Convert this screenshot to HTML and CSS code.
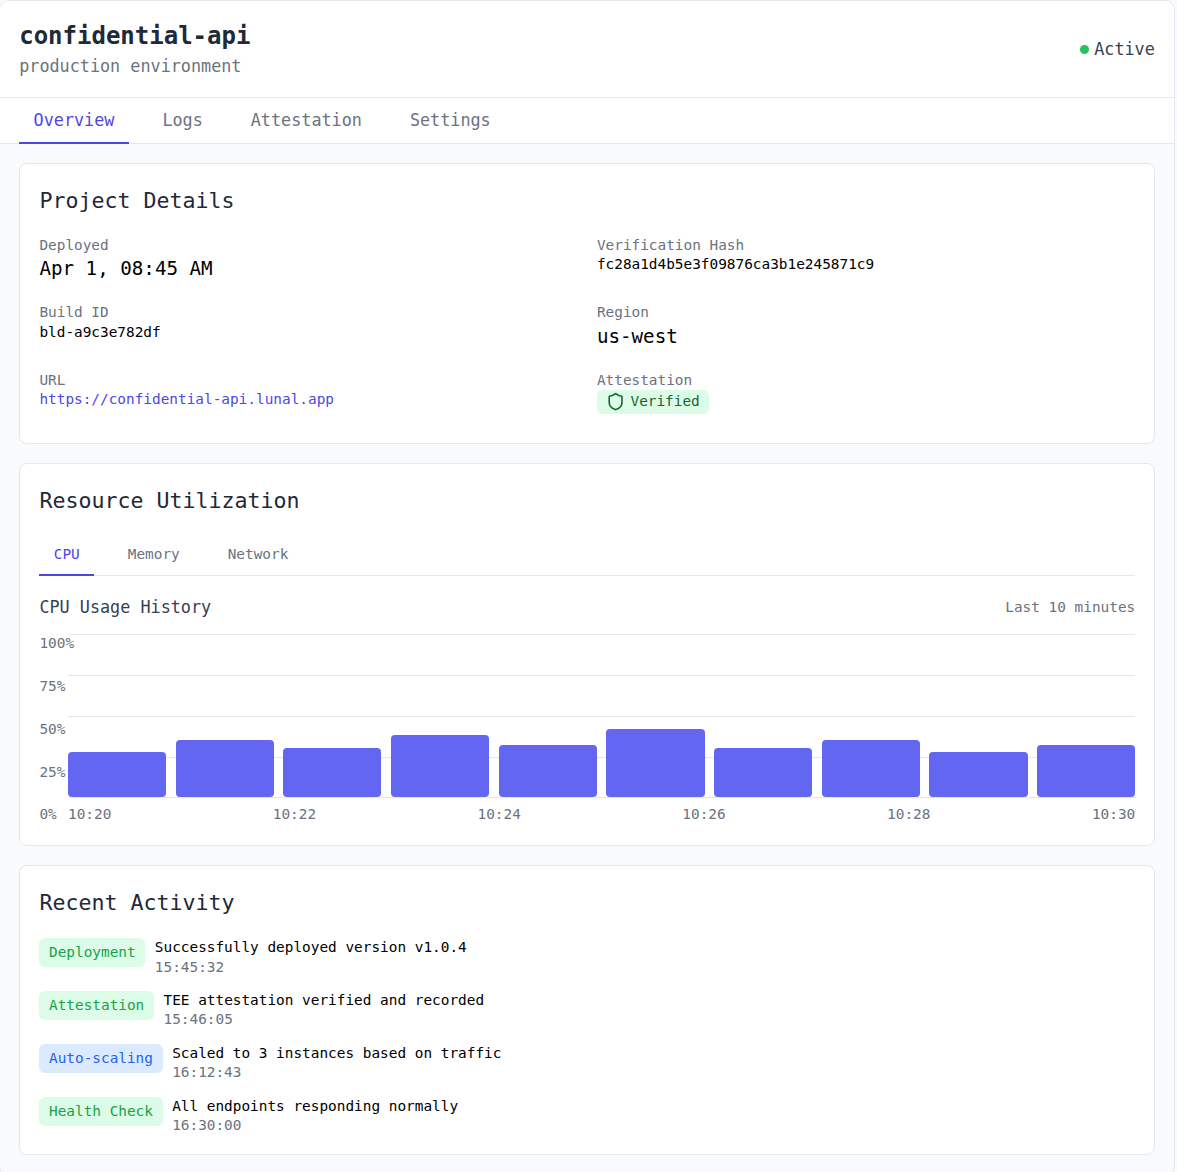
FILE: index.html
```html
<!DOCTYPE html>
<html lang="en">
<head>
<meta charset="utf-8">
<title>confidential-api</title>
<link rel="stylesheet" href="styles.css">
</head>
<body>
<div class="app">
  <header class="header">
    <div>
      <h1 class="project-name">confidential-api</h1>
      <p class="project-env">production environment</p>
    </div>
    <div class="status"><span class="status-dot"></span><span>Active</span></div>
  </header>
  <nav class="tabs main-tabs">
    <a class="tab active">Overview</a>
    <a class="tab">Logs</a>
    <a class="tab">Attestation</a>
    <a class="tab">Settings</a>
  </nav>
  <main class="content">
    <section class="card">
      <h2 class="card-title">Project Details</h2>
      <div class="details">
        <div><div class="label">Deployed</div><div class="value-lg">Apr 1, 08:45 AM</div></div>
        <div><div class="label">Verification Hash</div><div class="value">fc28a1d4b5e3f09876ca3b1e245871c9</div></div>
        <div><div class="label">Build ID</div><div class="value">bld-a9c3e782df</div></div>
        <div><div class="label">Region</div><div class="value-lg">us-west</div></div>
        <div><div class="label">URL</div><a class="value link">https://confidential-api.lunal.app</a></div>
        <div><div class="label">Attestation</div>
          <span class="verified">
            <svg class="shield" viewBox="0 0 24 24" fill="none" stroke="currentColor" stroke-width="2" stroke-linecap="round" stroke-linejoin="round"><path d="M20 13c0 5-3.5 7.5-7.66 8.95a1 1 0 0 1-.67-.01C7.5 20.5 4 18 4 13V6a1 1 0 0 1 1-1c2 0 4.5-1.2 6.24-2.72a1.17 1.17 0 0 1 1.52 0C14.51 3.81 17 5 19 5a1 1 0 0 1 1 1z"/></svg>
            <span class="verified-text">Verified</span>
          </span>
        </div>
      </div>
    </section>
    <section class="card">
      <h2 class="card-title">Resource Utilization</h2>
      <nav class="tabs sub-tabs">
        <a class="tab active">CPU</a>
        <a class="tab">Memory</a>
        <a class="tab">Network</a>
      </nav>
      <div class="chart-head">
        <span class="chart-title">CPU Usage History</span>
        <span class="chart-range">Last 10 minutes</span>
      </div>
      <div class="chart">
        <div class="y-axis"><span>100%</span><span>75%</span><span>50%</span><span>25%</span><span>0%</span></div>
        <div class="plot">
          <div class="grid-lines"><i></i><i></i><i></i><i></i><i></i></div>
          <div class="bars">
            <div class="bar" style="height:28%"></div>
            <div class="bar" style="height:35%"></div>
            <div class="bar" style="height:30%"></div>
            <div class="bar" style="height:38%"></div>
            <div class="bar" style="height:32%"></div>
            <div class="bar" style="height:42%"></div>
            <div class="bar" style="height:30%"></div>
            <div class="bar" style="height:35%"></div>
            <div class="bar" style="height:28%"></div>
            <div class="bar" style="height:32%"></div>
          </div>
        </div>
        <div class="x-axis"><span>10:20</span><span>10:22</span><span>10:24</span><span>10:26</span><span>10:28</span><span>10:30</span></div>
      </div>
    </section>
    <section class="card">
      <h2 class="card-title">Recent Activity</h2>
      <ul class="activity">
        <li class="activity-item"><span class="tag tag-green">Deployment</span><div><div class="activity-text">Successfully deployed version v1.0.4</div><div class="activity-time">15:45:32</div></div></li>
        <li class="activity-item"><span class="tag tag-green">Attestation</span><div><div class="activity-text">TEE attestation verified and recorded</div><div class="activity-time">15:46:05</div></div></li>
        <li class="activity-item"><span class="tag tag-blue">Auto-scaling</span><div><div class="activity-text">Scaled to 3 instances based on traffic</div><div class="activity-time">16:12:43</div></div></li>
        <li class="activity-item"><span class="tag tag-green">Health Check</span><div><div class="activity-text">All endpoints responding normally</div><div class="activity-time">16:30:00</div></div></li>
      </ul>
    </section>
  </main>
</div>
</body>
</html>
```
FILE: styles.css
```css
* { box-sizing: border-box; }
html, body { margin: 0; padding: 0; }
body {
  background: #f9fafb;
  font-family: "DejaVu Sans Mono", monospace;
  font-size: 14.4px;
  color: #1f2937;
  overflow: hidden;
}
.app {
  width: 1176px;
  margin-left: -1px;
  background: #f9fafb;
  border: 1px solid #e5e7eb;
  border-radius: 10px;
  overflow: hidden;
}
.header {
  display: flex;
  justify-content: space-between;
  align-items: center;
  background: #fff;
  padding: 20.2px 19.2px 18.2px 19.2px;
  border-bottom: 1px solid #e5e7eb;
}
.project-name {
  margin: 0 0 2.6px;
  font-size: 24px;
  line-height: 30px;
  font-weight: 700;
  color: #1f2937;
}
.project-env {
  margin: 0;
  font-size: 16.8px;
  line-height: 25.2px;
  color: #6b7280;
}
.status {
  display: flex;
  align-items: center;
  gap: 4.8px;
  margin-bottom: 1px;
  font-size: 16.8px;
  line-height: 25.2px;
  color: #374151;
}
.status-dot {
  width: 9.6px;
  height: 9.6px;
  border-radius: 50%;
  background: #22c55e;
}
.tabs {
  display: flex;
  gap: 19.2px;
  background: #fff;
  border-bottom: 1px solid #e5e7eb;
}
.main-tabs { padding: 0 19.2px; }
.tab {
  padding: 9.6px 14.4px 8.6px;
  color: #6b7280;
  border-bottom: 2px solid transparent;
  margin-bottom: -1px;
}
.main-tabs .tab {
  font-size: 16.8px;
  line-height: 25.2px;
}
.sub-tabs { margin: 16.9px 0 19.2px; }
.sub-tabs .tab {
  font-size: 14.4px;
  line-height: 21.6px;
}
.tab.active {
  color: #4f46e5;
  border-bottom-color: #4f46e5;
}
.content {
  display: flex;
  flex-direction: column;
  gap: 19.2px;
  padding: 19.2px 18.6px 19.2px 19px;
}
.card {
  background: #fff;
  border: 1px solid #e5e7eb;
  border-radius: 8px;
  padding: 20.8px 19.2px 19.2px 19.4px;
}
.card-title {
  margin: 0;
  font-size: 21.6px;
  line-height: 32.4px;
  font-weight: 400;
  color: #1f2937;
}
.details {
  display: grid;
  grid-template-columns: 1fr 1fr;
  gap: 19.2px;
  margin-top: 19.3px;
  padding-bottom: 9.4px;
}
.label {
  font-size: 14.4px;
  line-height: 19.2px;
  color: #6b7280;
}
.value {
  display: block;
  font-size: 14.4px;
  line-height: 19.2px;
  color: #000;
}
.value-lg {
  font-size: 19.2px;
  line-height: 28.8px;
  color: #000;
}
.value.link { color: #4f46e5; }
.verified {
  display: inline-flex;
  align-items: center;
  gap: 4.8px;
  padding: 0 9.6px;
  height: 24px;
  font-size: 14.4px;
  background: #dcfce7;
  color: #166534;
  border-radius: 6px;
}
.verified-text { padding-bottom: 2px; }
.shield { width: 19.2px; height: 19.2px; }
.chart-head {
  display: flex;
  justify-content: space-between;
  align-items: center;
  margin-bottom: 13.6px;
}
.chart-title { font-size: 16.8px; line-height: 25.2px; color: #374151; }
.chart-range { font-size: 14.4px; line-height: 21.6px; padding-bottom: 1px; color: #6b7280; }
.chart {
  display: grid;
  grid-template-columns: 28.6px 1fr;
  grid-template-rows: 163.4px auto;
  margin-bottom: -0.5px;
  color: #6b7280;
  font-size: 14.4px;
  line-height: 21.6px;
}
.y-axis {
  grid-row: 1 / 3;
  display: flex;
  flex-direction: column;
  justify-content: space-between;
  margin-top: -1.3px;
  white-space: nowrap;
}
.plot { position: relative; }
.grid-lines {
  position: absolute;
  inset: 0 0 -1px;
  display: flex;
  flex-direction: column;
  justify-content: space-between;
}
.grid-lines i { display: block; height: 1px; background: #e5e7eb; }
.bars {
  position: relative;
  height: 100%;
  display: flex;
  align-items: flex-end;
  gap: 9.6px;
}
.bar {
  flex: 1;
  background: #6366f1;
  border-radius: 4px;
}
.x-axis {
  grid-column: 2;
  display: flex;
  justify-content: space-between;
  padding-top: 7px;
}
.activity {
  list-style: none;
  margin: 19.3px 0 0;
  padding: 0;
  display: flex;
  flex-direction: column;
  gap: 14.4px;
}
.activity-item {
  display: flex;
  align-items: flex-start;
  gap: 9.6px;
}
.tag {
  padding: 3.9px 9.6px 3.3px;
  line-height: 21.6px;
  border-radius: 6px;
}
.tag-green { background: #dcfce7; color: #16a34a; }
.tag-blue { background: #dbeafe; color: #2563eb; }
.activity-text { line-height: 19.2px; color: #000; }
.activity-time { line-height: 19.2px; color: #6b7280; }
```
